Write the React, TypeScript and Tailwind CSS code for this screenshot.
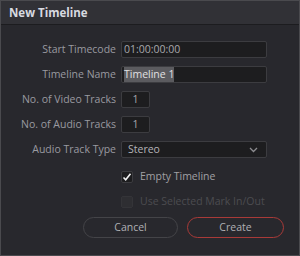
import React from 'react';

// New Timeline dialog — label column on the left, fields on the right.

const font = { fontFamily: '"Open Sans", "Noto Sans", sans-serif' };

function Row({ label, children }: { label: string; children: React.ReactNode }) {
  return (
    <div className="flex h-[25px] items-center">
      <div className="w-[116px] shrink-0 pr-[1px] text-right text-[10.5px] text-[#9a9aa0]">{label}</div>
      <div className="ml-[4px] flex flex-1 items-center">{children}</div>
    </div>
  );
}

function Field({ children, className = '' }: { children: React.ReactNode; className?: string }) {
  return (
    <div
      className={`flex h-[17px] items-center rounded-[2px] border border-[#3c3c40] bg-[#1d1d1f] px-[2px] text-[10.5px] text-[#a8a8ac] ${className}`}
    >
      {children}
    </div>
  );
}

export default function App() {
  return (
    <div style={font} className="flex h-[256px] w-[300px] flex-col border border-[#4a4a4e] bg-[#28282d]">
      <div className="flex h-[24px] items-center border-b border-[#1c1c1f] bg-[#313136] pl-[8px] text-[11.5px] font-bold text-[#d8dae0]">
        New Timeline
      </div>
      <div className="flex flex-col pt-[12px]">
        <Row label="Start Timecode">
          <Field className="w-[146px]">01:00:00:00</Field>
        </Row>
        <Row label="Timeline Name">
          <Field className="w-[146px]">
            <span className="bg-[#5b5b5f] text-[#e0e0e2]">Timeline 1</span>
          </Field>
        </Row>
        <Row label="No. of Video Tracks">
          <Field className="w-[29px] justify-center">1</Field>
        </Row>
        <Row label="No. of Audio Tracks">
          <Field className="w-[29px] justify-center">1</Field>
        </Row>
        <Row label="Audio Track Type">
          <Field className="w-[146px] justify-between pl-[6px] pr-[8px] text-[#b4b4b8]">
            <span>Stereo</span>
            <svg width="9" height="6" viewBox="0 0 9 6" fill="none" stroke="#8c8c90" strokeWidth="1.3">
              <path d="M1 1l3.5 3.5L8 1" />
            </svg>
          </Field>
        </Row>
        <div className="mt-[2px] flex h-[25px] items-center pl-[120px]">
          <div className="flex h-[12px] w-[12px] items-center justify-center rounded-[2px] border border-[#3c3c40] bg-[#1d1d1f]">
            <svg width="10" height="10" viewBox="0 0 10 10" fill="none" stroke="#f2f2f2" strokeWidth="1.6">
              <path d="M1.5 5.5l2.2 2.2L8.5 1.8" />
            </svg>
          </div>
          <span className="ml-[7px] text-[10.5px] text-[#a0a0a4]">Empty Timeline</span>
        </div>
        <div className="flex h-[25px] items-center pl-[120px]">
          <div className="h-[12px] w-[12px] rounded-[2px] border border-[#343438] bg-[#2e2e32]" />
          <span className="ml-[7px] text-[10.5px] text-[#4c4c50]">Use Selected Mark In/Out</span>
        </div>
        <div className="mt-[3px] flex pl-[82px]">
          <button className="flex h-[21px] w-[95px] items-center justify-center rounded-full border border-[#444448] text-[10.5px] text-[#b0b0b4]">
            Cancel
          </button>
          <button className="ml-[9px] flex h-[21px] w-[97px] items-center justify-center rounded-full border border-[#a83a38] text-[10.5px] text-[#b0b0b4]">
            Create
          </button>
        </div>
      </div>
    </div>
  );
}
